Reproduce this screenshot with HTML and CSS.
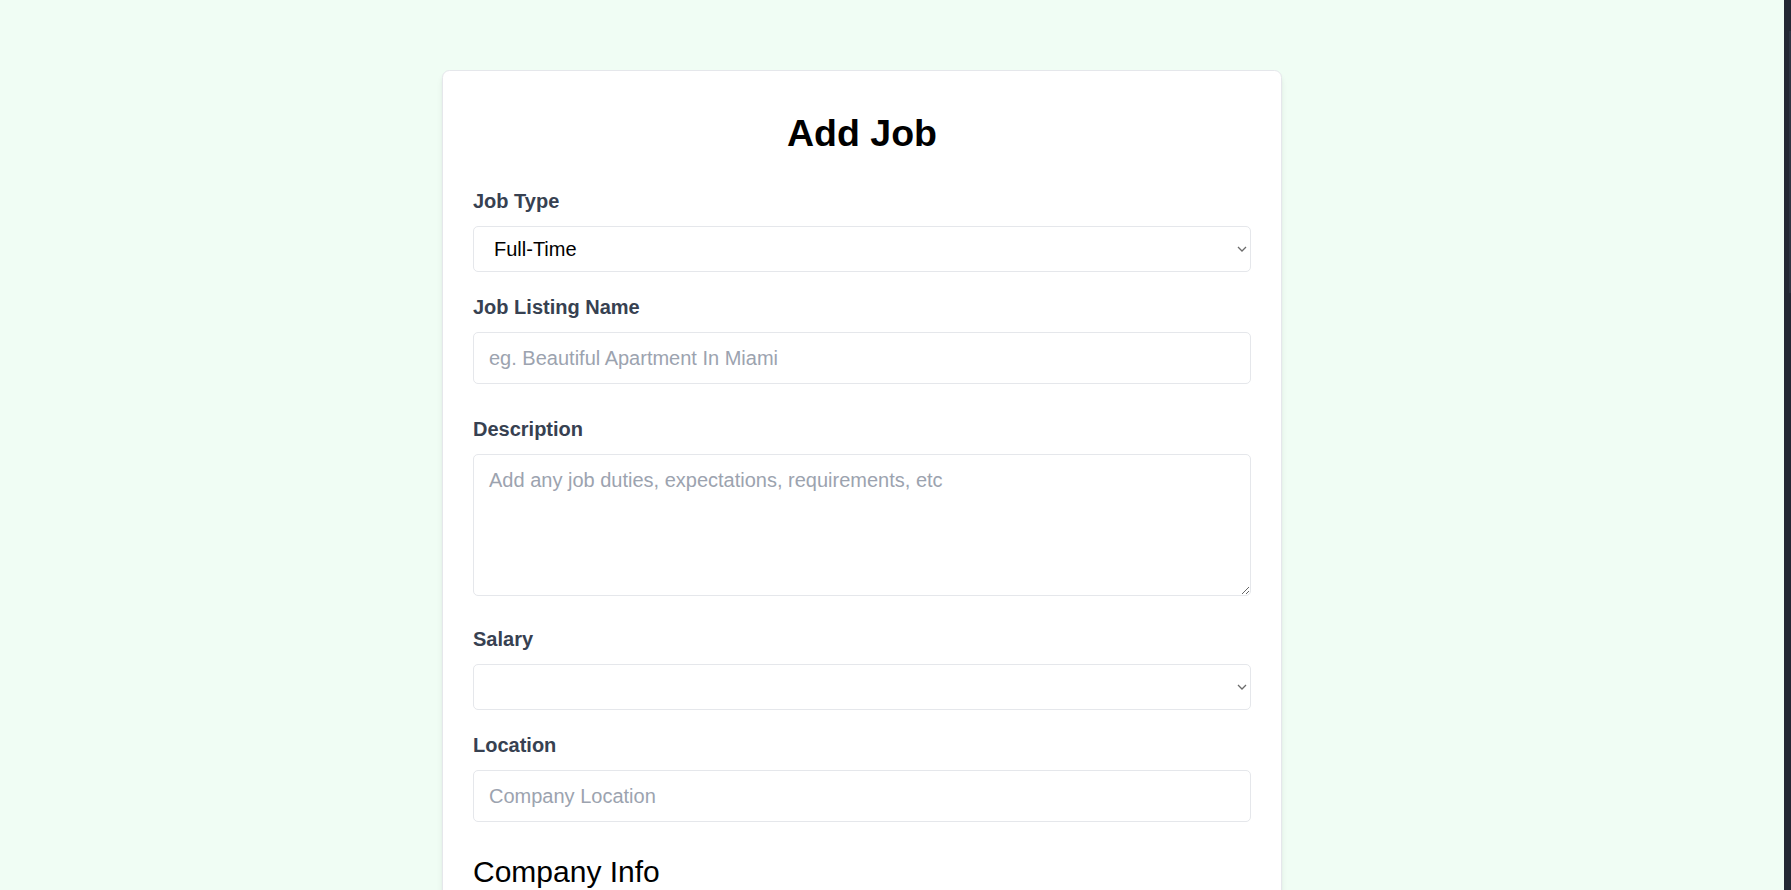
FILE: index.html
```html
<!DOCTYPE html>
<html lang="en">
<head>
<meta charset="utf-8">
<title>Add Job</title>
<link rel="stylesheet" href="styles.css">
</head>
<body>
<main class="page">
  <section class="card">
    <form>
      <h2 class="title">Add Job</h2>

      <div class="field">
        <label class="label" for="type">Job Type</label>
        <div class="select-wrap">
          <select id="type" class="control select">
            <option>Full-Time</option>
            <option>Part-Time</option>
            <option>Remote</option>
            <option>Internship</option>
          </select>
          <svg class="chev" width="10" height="6" viewBox="0 0 10 6" aria-hidden="true"><path d="M1 1 L5 5 L9 1" fill="none" stroke="#6b6b6b" stroke-width="1.3"/></svg>
        </div>
      </div>

      <div class="field">
        <label class="label" for="name">Job Listing Name</label>
        <input id="name" class="control text" type="text" placeholder="eg. Beautiful Apartment In Miami">
      </div>

      <div class="field">
        <label class="label" for="desc">Description</label>
        <textarea id="desc" class="control area" rows="4" placeholder="Add any job duties, expectations, requirements, etc"></textarea>
      </div>

      <div class="field">
        <label class="label" for="salary">Salary</label>
        <div class="select-wrap">
          <select id="salary" class="control select">
            <option></option>
          </select>
          <svg class="chev" width="10" height="6" viewBox="0 0 10 6" aria-hidden="true"><path d="M1 1 L5 5 L9 1" fill="none" stroke="#6b6b6b" stroke-width="1.3"/></svg>
        </div>
      </div>

      <div class="field">
        <label class="label" for="loc">Location</label>
        <input id="loc" class="control text" type="text" placeholder="Company Location">
      </div>

      <h3 class="subtitle">Company Info</h3>
    </form>
  </section>
</main>
<div class="scrollbar"><div class="thumb"></div></div>
</body>
</html>
```

FILE: styles.css
```css
html, body {
  margin: 0;
  padding: 0;
  height: 100%;
}

body {
  display: flex;
  overflow: hidden;
  font-family: "Liberation Sans", Arial, sans-serif;
  background: #f0fdf4;
}

.page {
  flex: 1;
  display: flex;
  justify-content: center;
  align-items: flex-start;
  padding: 70px 60px 0 0;
  background: #f0fdf4;
}

.card {
  width: 840px;
  box-sizing: border-box;
  background: #ffffff;
  border: 1px solid #e5e7eb;
  border-radius: 7.5px;
  padding: 40px 30px;
  box-shadow: 0 5px 7.5px -1.25px rgba(0, 0, 0, 0.08), 0 2.5px 5px -2.5px rgba(0, 0, 0, 0.08);
}

.title {
  margin: 0 0 30px;
  font-size: 37.5px;
  line-height: 45px;
  font-weight: 700;
  text-align: center;
  color: #000;
}

.field {
  display: flow-root;
  margin-bottom: 20px;
}

.label {
  display: block;
  margin-bottom: 10px;
  font-size: 20px;
  line-height: 30px;
  font-weight: 700;
  color: #374151;
}

.control {
  display: block;
  width: 100%;
  box-sizing: border-box;
  margin: 0;
  border: 1px solid #e5e7eb;
  border-radius: 5px;
  padding: 10px 15px;
  font-family: "Liberation Sans", Arial, sans-serif;
  font-size: 20px;
  line-height: 30px;
  color: #000;
  background: #fff;
  outline: none;
}

.select-wrap {
  position: relative;
}

.select {
  -webkit-appearance: none;
  appearance: none;
  height: 46px;
  padding: 0 30px 0 20px;
  line-height: 44px;
}

.chev {
  position: absolute;
  right: 4px;
  top: 20px;
  width: 10px;
  height: 6px;
  pointer-events: none;
}

.text {
  margin-bottom: 10px;
}

.area {
  height: 142px;
  margin-bottom: 8px;
  resize: vertical;
}

.control::placeholder {
  color: #9ca3af;
  opacity: 1;
}

.subtitle {
  margin: 0;
  font-size: 30px;
  line-height: 40px;
  font-weight: 400;
  color: #000;
}

.scrollbar {
  width: 7px;
  flex: 0 0 7px;
  background: #232733;
  display: flex;
  justify-content: flex-end;
  padding-top: 31px;
  box-sizing: border-box;
}

.thumb {
  width: 2px;
  height: 262px;
  background: #2e3442;
}
```
